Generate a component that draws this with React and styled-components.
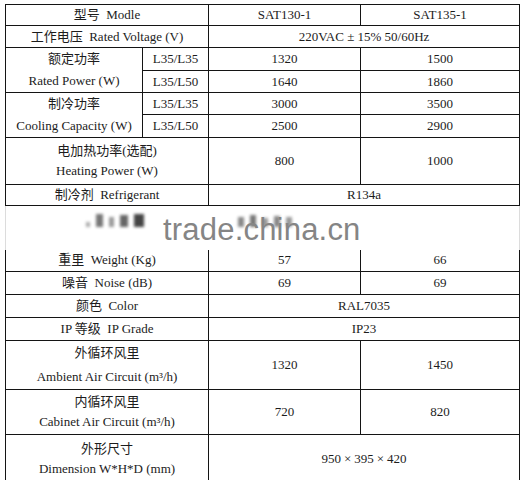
import React from "react";
import styled, { createGlobalStyle } from "styled-components";

const Global = createGlobalStyle`
  body {
    margin: 0;
    background: #fff;
  }
`;

const Page = styled.div`
  position: relative;
  width: 514px;
  padding: 4px 5px 0 5px;
`;

const Table = styled.table`
  width: 514px;
  border-collapse: collapse;
  table-layout: fixed;
  font-family: "Liberation Serif", "Noto Sans CJK SC", serif;
  font-size: 13px;
  color: #1c1c1c;
`;

const Row = styled.tr`
  height: ${(p) => p.$h}px;
`;

const Cell = styled.td`
  border: 1px solid #141414;
  padding: 0;
  text-align: center;
  vertical-align: middle;
  white-space: nowrap;
  line-height: ${(p) => p.$lh || 20}px;
`;

const BlurCell = styled.td`
  border-left: 1px solid #dcdcdc;
  border-right: 1px solid #dcdcdc;
  border-bottom: hidden;
  padding: 0;
  position: relative;
`;

const Smudges = styled.div`
  position: absolute;
  top: 8px;
  left: ${(p) => p.$x}px;
  display: flex;
  gap: 6px;
  filter: blur(1.6px);
`;

const Blob = styled.div`
  width: ${(p) => p.$w}px;
  height: ${(p) => p.$h}px;
  margin-top: ${(p) => 13 - p.$h}px;
  background: ${(p) => p.$c};
`;

const Watermark = styled.span`
  position: absolute;
  left: 163px;
  top: 214px;
  font-family: "Liberation Sans", Arial, sans-serif;
  font-size: 31px;
  line-height: 31px;
  color: #858585;
  letter-spacing: 0.2px;
  pointer-events: none;
`;

const Times = styled.span`
  margin: 0 3px;
`;

const Line = styled.div``;

const Two = ({ a, b }) => (
  <>
    <Line>{a}</Line>
    <Line>{b}</Line>
  </>
);

const leftBlobs = [
  { w: 4, h: 5, c: "#aaa" },
  { w: 7, h: 13, c: "#777" },
  { w: 5, h: 10, c: "#999" },
  { w: 8, h: 12, c: "#666" },
  { w: 10, h: 13, c: "#444" },
];
const rightBlobs = [
  { w: 6, h: 10, c: "#888" },
  { w: 6, h: 12, c: "#777" },
  { w: 6, h: 9, c: "#999" },
  { w: 6, h: 11, c: "#888" },
  { w: 6, h: 10, c: "#999" },
];

export default function App() {
  return (
    <>
      <Global />
      <Page>
        <Table>
          <colgroup>
            <col style={{ width: 137 }} />
            <col style={{ width: 66 }} />
            <col style={{ width: 152 }} />
            <col style={{ width: 159 }} />
          </colgroup>
          <tbody>
            <Row $h={21}>
              <Cell colSpan={2}>型号&nbsp; Modle</Cell>
              <Cell>SAT130-1</Cell>
              <Cell>SAT135-1</Cell>
            </Row>
            <Row $h={22}>
              <Cell colSpan={2}>工作电压&nbsp; Rated Voltage (V)</Cell>
              <Cell colSpan={2}>220VAC ± 15% 50/60Hz</Cell>
            </Row>
            <Row $h={22}>
              <Cell rowSpan={2} $lh={22}>
                <Two a="额定功率" b="Rated Power (W)" />
              </Cell>
              <Cell>L35/L35</Cell>
              <Cell>1320</Cell>
              <Cell>1500</Cell>
            </Row>
            <Row $h={21}>
              <Cell>L35/L50</Cell>
              <Cell>1640</Cell>
              <Cell>1860</Cell>
            </Row>
            <Row $h={22}>
              <Cell rowSpan={2} $lh={22}>
                <Two a="制冷功率" b="Cooling Capacity (W)" />
              </Cell>
              <Cell>L35/L35</Cell>
              <Cell>3000</Cell>
              <Cell>3500</Cell>
            </Row>
            <Row $h={23}>
              <Cell>L35/L50</Cell>
              <Cell>2500</Cell>
              <Cell>2900</Cell>
            </Row>
            <Row $h={47}>
              <Cell colSpan={2}>
                <Two a="电加热功率(选配)" b="Heating Power (W)" />
              </Cell>
              <Cell>800</Cell>
              <Cell>1000</Cell>
            </Row>
            <Row $h={21}>
              <Cell colSpan={2}>制冷剂&nbsp; Refrigerant</Cell>
              <Cell colSpan={2}>R134a</Cell>
            </Row>
            <Row $h={44}>
              <BlurCell colSpan={4}>
                <Smudges $x={80}>
                  {leftBlobs.map((b, i) => (
                    <Blob key={i} $w={b.w} $h={b.h} $c={b.c} />
                  ))}
                </Smudges>
                <Smudges $x={232}>
                  {rightBlobs.map((b, i) => (
                    <Blob key={i} $w={b.w} $h={b.h} $c={b.c} />
                  ))}
                </Smudges>
              </BlurCell>
            </Row>
            <Row $h={22}>
              <Cell colSpan={2}>重里&nbsp; Weight (Kg)</Cell>
              <Cell>57</Cell>
              <Cell>66</Cell>
            </Row>
            <Row $h={23}>
              <Cell colSpan={2}>噪音&nbsp; Noise (dB)</Cell>
              <Cell>69</Cell>
              <Cell>69</Cell>
            </Row>
            <Row $h={23}>
              <Cell colSpan={2}>颜色&nbsp; Color</Cell>
              <Cell colSpan={2}>RAL7035</Cell>
            </Row>
            <Row $h={23}>
              <Cell colSpan={2}>IP 等级&nbsp; IP Grade</Cell>
              <Cell colSpan={2}>IP23</Cell>
            </Row>
            <Row $h={46}>
              <Cell colSpan={2} $lh={24}>
                <Two a="外循环风里" b="Ambient Air Circuit (m³/h)" />
              </Cell>
              <Cell>1320</Cell>
              <Cell>1450</Cell>
            </Row>
            <Row $h={45}>
              <Cell colSpan={2}>
                <Two a="内循环风里" b="Cabinet Air Circuit (m³/h)" />
              </Cell>
              <Cell>720</Cell>
              <Cell>820</Cell>
            </Row>
            <Row $h={48}>
              <Cell colSpan={2}>
                <Two a="外形尺寸" b="Dimension W*H*D (mm)" />
              </Cell>
              <Cell colSpan={2}>
                950<Times>×</Times>395<Times>×</Times>420
              </Cell>
            </Row>
          </tbody>
        </Table>
        <Watermark>trade.china.cn</Watermark>
      </Page>
    </>
  );
}
